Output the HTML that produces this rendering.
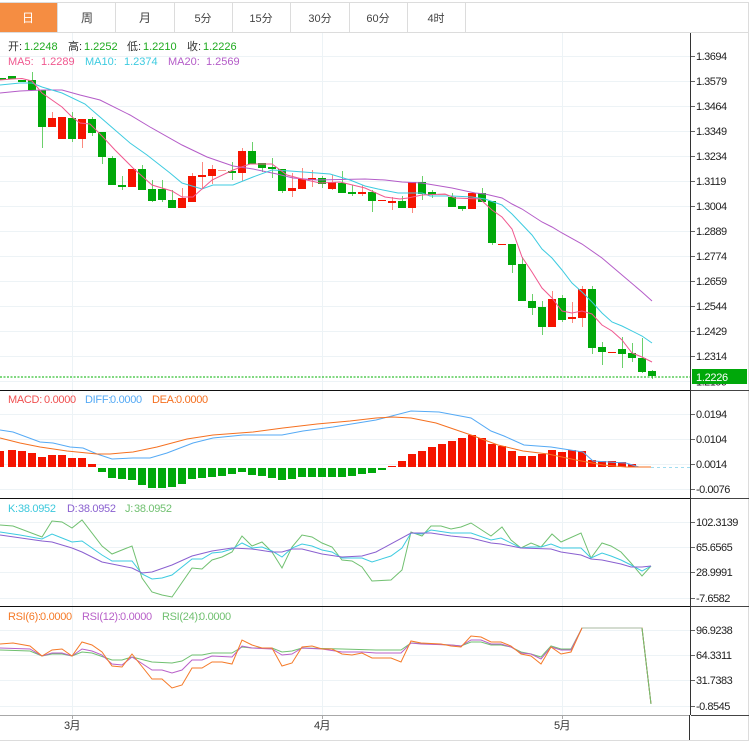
<!DOCTYPE html>
<html><head><meta charset="utf-8"><style>
html,body{margin:0;padding:0;background:#fff}
svg{display:block;font-family:"Liberation Sans","Noto Sans CJK SC",sans-serif}
.a text{font-size:11px;fill:#222;letter-spacing:-.5px}
.l{fill:none;stroke-width:1}
</style></head><body>
<svg width="752" height="756" viewBox="0 0 752 756" xmlns="http://www.w3.org/2000/svg">
<rect width="752" height="756" fill="#fff"/>
<!-- tabs -->
<rect x="0" y="3" width="57" height="29" fill="#f58d42"/>
<path d="M0 2.5H749M0 32.5H749M57.5 3V32M115.5 3V32M174.5 3V32M232.5 3V32M290.5 3V32M349.5 3V32M407.5 3V32M465.5 3V32M748.5 2V740M0 740.5H749" stroke="#dcdcdc" fill="none"/>
<g font-size="12" fill="#444" text-anchor="middle">
<text x="28" y="22" fill="#fff">日</text><text x="87" y="22">周</text><text x="145" y="22">月</text></g>
<g font-size="11" fill="#444" text-anchor="middle">
<text x="203" y="22">5分</text><text x="261" y="22">15分</text><text x="320" y="22">30分</text><text x="378" y="22">60分</text><text x="436" y="22">4时</text>
</g>
<!-- grid -->
<path d="M0 56.5H690M0 81.5H690M0 106.5H690M0 131.5H690M0 156.5H690M0 181.5H690M0 206.5H690M0 231.5H690M0 256.5H690M0 281.5H690M0 306.5H690M0 331.5H690M0 356.5H690M0 381.5H690M0 414.5H690M0 439.5H690M0 464.5H690M0 489.5H690M0 522.5H690M0 547.5H690M0 572.5H690M0 598.5H690M0 630.5H690M0 655.5H690M0 680.5H690M0 706.5H690M72.5 33V715M322.5 33V715M562.5 33V715" stroke="#edf3f6" fill="none"/>
<!-- wicks -->
<path d="M32.5 72V90M42.5 127V148M72.5 112V142M92.5 117V136M102.5 157V164M112.5 156V185M122.5 176V190M142.5 165V190M152.5 180V202M162.5 180V202M172.5 190V208M232.5 162V180M252.5 142V164M262.5 163V172M272.5 158V178M282.5 169V193M322.5 176V188M342.5 171V193M352.5 185V196M372.5 190V212M402.5 196V208M422.5 176V200M432.5 190V198M452.5 193V207M462.5 206V211M482.5 188V202M492.5 243V245M512.5 265V273M522.5 257V301M532.5 294V315M542.5 301V335M562.5 295V322M592.5 286V354M602.5 342V365M622.5 337V368M632.5 343V362M642.5 338V373M652.5 370V379" stroke="#6bd06b" fill="none"/>
<path d="M52.5 112V127M82.5 139V148M182.5 188V208M192.5 173V202M202.5 162V188M212.5 165V184M242.5 148V181M292.5 173V197M302.5 168V189M312.5 170V187M332.5 175V190M362.5 185V196M392.5 197V210M412.5 182V213M552.5 291V327M572.5 302V323M582.5 286V327" stroke="#fb8a80" fill="none"/>
<!-- green bodies -->
<path fill="#00a80a" d="M0 78h6v2h-6zM8 76h8v3h-8zM18 80h8v2h-8zM28 80h8v10h-8zM38 90h8v37h-8zM68 118h8v21h-8zM88 119h8v14h-8zM98 132h8v25h-8zM108 158h8v27h-8zM118 185h8v2h-8zM138 169h8v21h-8zM148 189h8v12h-8zM158 189h8v11h-8zM168 200h8v8h-8zM228 171h8v2h-8zM248 151h8v13h-8zM258 163h8v5h-8zM268 167h8v2h-8zM278 169h8v22h-8zM318 178h8v6h-8zM338 183h8v10h-8zM348 192h8v2h-8zM368 192h8v9h-8zM398 201h8v7h-8zM418 182h8v12h-8zM428 192h8v3h-8zM448 197h8v10h-8zM458 206h8v3h-8zM478 193h8v9h-8zM488 201h8v42h-8zM508 244h8v21h-8zM518 264h8v37h-8zM528 301h8v7h-8zM538 307h8v20h-8zM558 298h8v22h-8zM588 289h8v59h-8zM598 347h8v5h-8zM618 349h8v5h-8zM628 353h8v5h-8zM638 358h8v14h-8zM648 371h8v5h-8z"/>
<!-- red bodies -->
<path fill="#f51400" d="M48 118h8v9h-8zM58 117h8v22h-8zM78 119h8v20h-8zM128 169h8v18h-8zM178 198h8v10h-8zM188 176h8v26h-8zM198 175h8v2h-8zM208 169h8v7h-8zM238 151h8v22h-8zM288 188h8v3h-8zM298 179h8v10h-8zM308 178h8v2h-8zM328 182h8v7h-8zM358 192h8v2h-8zM378 200h8v1h-8zM388 201h8v2h-8zM408 182h8v26h-8zM468 193h8v16h-8zM498 244h8v1h-8zM548 299h8v28h-8zM568 317h8v2h-8zM578 289h8v29h-8zM608 352h8v1h-8z"/>
<path fill="#f8a096" d="M218 170h8v1h-8zM438 194h8v1h-8z"/>
<!-- MAs -->
<polyline class="l" stroke="#b45cc8" points="0,93 20,91 42,90 62,90 80,95 100,100 130,115 150,127 182,145 207,157 233,166 253,169 277,174 293,178 317,180 365,179 385,180 402,182 422,183 452,188 475,193 485,194 502,198 512,204 522,209 542,222 552,227 562,233 582,244 602,258 622,275 642,292 652,301"/>
<polyline class="l" stroke="#3dcbe0" points="0,85 20,83 32,83 42,87 62,93 85,104 100,117 130,143 147,155 170,173 182,183 202,189 213,185 233,185 253,177 272,170 290,171 330,174 350,180 365,186 378,189 398,193 422,193 430,196 452,196 472,197 485,199 502,205 512,214 532,235 542,249 552,258 562,270 572,283 582,292 592,302 602,313 612,322 622,326 642,336 652,343"/>
<polyline class="l" stroke="#f0588f" points="0,80 12,79 22,78.5 32,81 42,93 62,107 72,117 80,123 90,124 102,136 115,150 133,168 152,185 172,191 182,197 193,197 212,180 233,170 250,164 272,164 287,175 302,179 320,183 340,182 365,188 385,197 400,199 408,198 422,195 445,194 455,198 480,199 492,210 502,217 512,229 522,257 532,272 542,288 552,298 562,311 572,313 582,311 592,314 602,325 612,331 622,340 632,353 642,357 652,362"/>
<path d="M0 377H690" stroke="#00b000" stroke-dasharray="2 1.5" fill="none"/>
<!-- MACD bars -->
<path fill="#f51400" d="M-2 451h6v16h-6zM8 450h8v17h-8zM18 451h8v16h-8zM28 453h8v14h-8zM38 457h8v10h-8zM48 455h8v12h-8zM58 455h8v12h-8zM68 458h8v9h-8zM78 458h8v9h-8zM88 464h8v3h-8zM388 466h8v1h-8zM398 461h8v6h-8zM408 454h8v13h-8zM418 451h8v16h-8zM428 447h8v20h-8zM438 444h8v23h-8zM448 441h8v26h-8zM458 438h8v29h-8zM468 435h8v32h-8zM478 438h8v29h-8zM488 444h8v23h-8zM498 446h8v21h-8zM508 451h8v16h-8zM518 456h8v11h-8zM528 456h8v11h-8zM538 454h8v13h-8zM548 450h8v17h-8zM558 452h8v15h-8zM568 450h8v17h-8zM578 451h8v16h-8zM588 460h8v7h-8zM598 461h8v6h-8zM608 461h8v6h-8zM618 462h8v5h-8zM628 464h8v3h-8z"/>
<path fill="#00a80a" d="M98 468h8v4h-8zM108 468h8v10h-8zM118 468h8v11h-8zM128 468h8v12h-8zM138 468h8v17h-8zM148 468h8v20h-8zM158 468h8v20h-8zM168 468h8v19h-8zM178 468h8v16h-8zM188 468h8v11h-8zM198 468h8v10h-8zM208 468h8v9h-8zM218 468h8v8h-8zM228 468h8v6h-8zM238 468h8v4h-8zM248 468h8v7h-8zM258 468h8v8h-8zM268 468h8v10h-8zM278 468h8v12h-8zM288 468h8v11h-8zM298 468h8v9h-8zM308 468h8v9h-8zM318 468h8v9h-8zM328 468h8v9h-8zM338 468h8v9h-8zM348 468h8v8h-8zM358 468h8v6h-8zM368 468h8v5h-8zM378 468h8v2h-8z"/>
<polyline class="l" stroke="#55aaf5" points="0,430 13,432 40,442 53,443 70,447 83,448 97,454 112,459 133,458 150,458 167,453 193,443 213,438 243,435 282,435 303,431 333,427 376,420 411,411 439,412 471,418 491,431 504,436 524,445 551,447 583,452 593,461 609,462 626,463 639,467 651,467"/>
<polyline class="l" stroke="#f57020" points="0,438 20,443 40,447 67,451 97,454 110,454 133,452 157,447 187,439 213,435 253,432 283,428 317,424 350,421 376,418 393,417 411,418 436,423 471,435 498,445 523,451 548,454 576,460 603,465 626,467 651,467"/>
<path d="M651 467.5H690" stroke="#9fdcf0" stroke-dasharray="3 3" fill="none"/>
<!-- KDJ -->
<polyline class="l" stroke="#70c070" points="0,525 13,526 42,537 52,521 62,522 72,528 82,520 102,546 112,554 132,546 142,578 152,592 162,595 172,597 192,568 202,569 212,560 222,557 232,552 242,536 252,546 262,542 272,552 282,568 292,547 302,535 312,537 322,543 332,547 342,560 352,561 362,567 372,581 391,580 402,570 411,532 422,536 431,526 441,526 451,529 461,527 471,523 491,536 502,527 511,540 521,548 531,543 541,547 552,534 561,542 581,533 591,558 602,543 611,546 621,552 631,563 642,576 651,566"/>
<polyline class="l" stroke="#3dcbe0" points="0,532 20,535 42,539 52,534 62,538 72,542 82,541 102,555 112,561 132,561 142,574 152,579 162,578 172,575 192,559 202,559 212,553 222,552 232,549 242,543 252,548 262,547 272,551 282,557 292,548 302,544 312,546 322,550 332,552 342,558 362,558 372,562 391,556 402,548 411,533 422,534 431,530 451,533 471,533 491,540 501,538 521,548 531,547 541,547 551,544 561,548 581,548 591,558 602,553 611,556 621,560 631,565 642,571 651,566"/>
<polyline class="l" stroke="#8a60d0" points="0,535 42,541 52,542 72,548 82,552 102,562 122,566 132,568 142,573 152,572 172,565 192,556 212,551 232,548 252,549 272,552 282,552 292,549 302,549 322,554 342,557 362,556 376,552 411,533 431,533 451,536 471,538 491,543 501,544 521,548 551,549 561,552 581,555 591,559 602,560 621,564 631,567 642,567 651,566"/>
<!-- RSI -->
<polyline class="l" stroke="#70c070" points="0,650 30,651 42,656 52,654 62,654 72,656 82,652 92,653 112,660 122,660 132,657 152,662 172,663 182,661 192,655 202,655 212,653 232,653 242,647 252,648 272,648 282,652 292,651 302,648 342,649 376,650 401,650 411,643 451,645 461,646 471,642 481,642 491,645 501,645 511,647 521,652 531,654 541,657 551,646 561,649 571,649 582,628 642,628 651,704"/>
<polyline class="l" stroke="#b860c8" points="0,648 30,649 42,656 52,653 62,653 72,656 82,649 92,651 102,655 112,664 122,665 132,657 152,670 162,670 172,673 182,670 192,660 202,660 212,656 232,657 242,646 252,648 272,649 282,655 292,654 302,648 322,649 342,652 362,652 376,653 401,653 411,643 421,644 451,645 461,646 471,640 481,640 491,644 501,644 511,647 521,653 531,654 541,659 551,647 561,650 571,650 582,628 642,628 651,704"/>
<polyline class="l" stroke="#f57a28" points="0,644 13,643 30,646 42,656 52,650 62,649 72,656 82,642 92,645 102,652 112,666 122,667 132,654 152,679 162,679 172,688 182,685 192,668 202,668 212,662 222,662 232,664 242,640 252,645 262,648 272,648 282,666 292,663 302,647 312,646 322,649 332,649 342,654 352,655 362,653 372,658 391,658 401,662 411,641 421,643 441,644 451,646 461,647 471,636 481,637 491,642 501,642 511,646 521,654 531,656 541,664 551,647 561,654 571,652 582,628 642,628 651,704"/>
<polyline points="582,628 642,628" fill="none" stroke="#a9b8a0" stroke-width="1"/>
<polyline points="642,628 651,704" fill="none" stroke="#70c070" stroke-width="1"/>
<!-- panel borders -->
<path d="M0 390.5H690M0 498.5H690M0 606.5H690" stroke="#111" fill="none"/>
<path d="M691 390.5H749M691 498.5H749M691 606.5H749M691 715.5H749" stroke="#444" fill="none"/>
<path d="M0 715.5H690M72.5 715V719M322.5 715V719M562.5 715V719" stroke="#a8a8a8" fill="none"/>
<path d="M690.5 33V715M689.5 715V740" stroke="#333" fill="none"/>
<path d="M691 56.5h4M691 81.5h4M691 106.5h4M691 131.5h4M691 156.5h4M691 181.5h4M691 206.5h4M691 231.5h4M691 256.5h4M691 281.5h4M691 306.5h4M691 331.5h4M691 356.5h4M691 414.5h4M691 439.5h4M691 464.5h4M691 489.5h4M691 522.5h4M691 547.5h4M691 572.5h4M691 598.5h4M691 630.5h4M691 655.5h4M691 680.5h4M691 706.5h4" stroke="#666" fill="none"/>
<!-- axis labels -->
<g class="a">
<text x="696" y="60">1.3694</text><text x="696" y="85">1.3579</text><text x="696" y="110">1.3464</text><text x="696" y="135">1.3349</text><text x="696" y="160">1.3234</text><text x="696" y="185">1.3119</text><text x="696" y="210">1.3004</text><text x="696" y="235">1.2889</text><text x="696" y="260">1.2774</text><text x="696" y="285">1.2659</text><text x="696" y="310">1.2544</text><text x="696" y="335">1.2429</text><text x="696" y="360">1.2314</text><text x="696" y="385.5">1.2199</text>
<text x="696" y="418">0.0194</text><text x="696" y="443">0.0104</text><text x="696" y="468">0.0014</text><text x="696" y="493">-0.0076</text>
<text x="696" y="526">102.3139</text><text x="696" y="551">65.6565</text><text x="696" y="576">28.9991</text><text x="696" y="602">-7.6582</text>
<text x="696" y="634">96.9238</text><text x="696" y="659">64.3311</text><text x="696" y="684">31.7383</text><text x="696" y="710">-0.8545</text>
</g>
<rect x="692" y="369" width="55" height="15" fill="#00a80a"/>
<text x="696" y="381" font-size="11" fill="#fff" letter-spacing="-.3">1.2226</text>
<g font-size="11" fill="#333" text-anchor="middle" letter-spacing="-.5"><text x="72" y="729">3月</text><text x="322" y="729">4月</text><text x="562" y="729">5月</text></g>
<!-- legends -->
<g font-size="11">
<text x="8" y="50" fill="#333">开:</text><text x="24" y="50" fill="#1faa1f">1.2248</text>
<text x="68" y="50" fill="#333">高:</text><text x="84" y="50" fill="#1faa1f">1.2252</text>
<text x="127" y="50" fill="#333">低:</text><text x="143" y="50" fill="#1faa1f">1.2210</text>
<text x="187" y="50" fill="#333">收:</text><text x="203" y="50" fill="#1faa1f">1.2226</text>
<text x="8" y="65" fill="#f0588f">MA5:</text><text x="41" y="65" fill="#f0588f">1.2289</text>
<text x="85" y="65" fill="#3dcbe0">MA10:</text><text x="124" y="65" fill="#3dcbe0">1.2374</text>
<text x="168" y="65" fill="#b45cc8">MA20:</text><text x="206" y="65" fill="#b45cc8">1.2569</text>
<g letter-spacing="-.3">
<text x="8" y="403" fill="#f05050">MACD:</text><text x="44" y="403" fill="#f05050">0.0000</text>
<text x="85" y="403" fill="#55aaf5">DIFF:</text><text x="110" y="403" fill="#55aaf5">0.0000</text>
<text x="152" y="403" fill="#f57020">DEA:</text><text x="176" y="403" fill="#f57020">0.0000</text>
<text x="8" y="512" fill="#3cc8dc">K:</text><text x="18" y="512" fill="#3cc8dc">38.0952</text>
<text x="67" y="512" fill="#8a60d0">D:</text><text x="78" y="512" fill="#8a60d0">38.0952</text>
<text x="125" y="512" fill="#70c070">J:</text><text x="134" y="512" fill="#70c070">38.0952</text>
<text x="8" y="620" fill="#f57a28">RSI(6):</text><text x="40" y="620" fill="#f57a28">0.0000</text>
<text x="82" y="620" fill="#b860c8">RSI(12):</text><text x="120" y="620" fill="#b860c8">0.0000</text>
<text x="162" y="620" fill="#70c070">RSI(24):</text><text x="199" y="620" fill="#70c070">0.0000</text>
</g>
</g>
</svg>
</body></html>
